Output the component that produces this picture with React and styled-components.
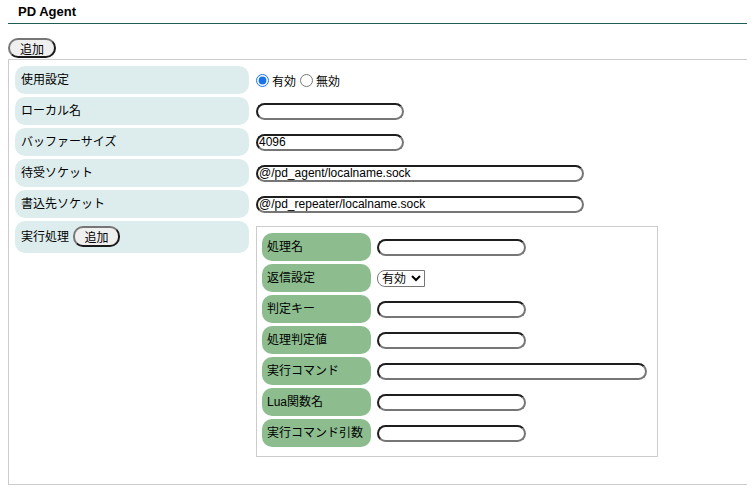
import React from "react";
import styled, { createGlobalStyle } from "styled-components";

const GlobalStyle = createGlobalStyle`
  html, body { overflow-x: hidden; }
  body {
    margin: 0 8px;
    background: #fff;
    color: #000;
    font-family: "Liberation Sans", "Noto Sans CJK JP", sans-serif;
  }
`;

const cjk = `"Liberation Sans", "Noto Sans CJK JP", sans-serif`;

const Header = styled.div`
  width: calc(100% + 30px);
  height: 23px;
  line-height: 23px;
  padding-left: 10px;
  font-size: 13px;
  font-weight: bold;
  border-bottom: 1px solid #1d5e57;
`;

const PillButton = styled.button`
  display: ${(p) => (p.$inline ? "inline-block" : "block")};
  width: ${(p) => p.$w}px;
  height: ${(p) => p.$h}px;
  margin: ${(p) => (p.$inline ? "0 0 0 4px" : "14px 0 1px 0")};
  padding: 0;
  background: #efefef;
  border-style: solid;
  border-width: 2px;
  border-color: #767676 #1a1a1a #1a1a1a #767676;
  border-radius: 10px;
  font-family: ${cjk};
  font-size: 12px;
  color: #000;
  vertical-align: middle;
`;

const Panel = styled.div`
  width: calc(100% + 30px);
  height: 426px;
  box-sizing: border-box;
  border: 1px solid #cccccc;
  padding: 6px;
`;

const Grid = styled.div`
  display: grid;
  grid-template-columns: ${(p) => p.$label}px auto;
  column-gap: ${(p) => p.$gap}px;
  row-gap: 3px;
  align-items: center;
`;

const Label = styled.div`
  background: ${(p) => (p.$inner ? "#8dbd8f" : "#ddeded")};
  border-radius: 10px;
  padding: ${(p) => (p.$tall ? "5px 6px 6px" : p.$inner ? "5px 5px" : "5px 6px")};
  line-height: 18px;
  font-family: ${cjk};
  font-size: 12px;
  display: flex;
  align-items: center;
  align-self: ${(p) => (p.$tall ? "start" : "stretch")};
`;

const Value = styled.div`
  display: flex;
  align-items: center;
  font-family: ${cjk};
  font-size: 12px;
  align-self: ${(p) => (p.$top ? "start" : "center")};
  margin-top: ${(p) => (p.$top ? 5 : 0)}px;
`;

const Radio = styled.input`
  width: 13px;
  height: 13px;
  margin: 0 3px 0 0;
  accent-color: #1a73e8;
`;

const RadioText = styled.span`
  margin-right: 4px;
`;

const TextInput = styled.input`
  width: ${(p) => p.$w}px;
  height: 17px;
  box-sizing: border-box;
  padding: 0 1px;
  margin: 0;
  border-style: solid;
  border-width: 2px;
  border-color: #1e1e1e #767676 #767676 #1e1e1e;
  border-radius: 10px;
  font-family: "Liberation Sans", sans-serif;
  font-size: 12px;
  color: #000;
  background: #fff;
  outline: none;
`;

const Select = styled.select`
  width: 48px;
  height: 17px;
  box-sizing: border-box;
  padding: 0;
  margin: 0;
  border: 1px solid #767676;
  border-radius: 8px 0 0 8px;
  font-family: ${cjk};
  font-size: 12px;
  background: #fff;
  color: #000;
`;

const InnerBox = styled.div`
  width: 402px;
  height: 231px;
  box-sizing: border-box;
  border: 1px solid #cccccc;
  padding: 6px 5px;
`;

const innerRows = [
  { label: "処理名", w: 149 },
  { label: "返信設定", select: true },
  { label: "判定キー", w: 149 },
  { label: "処理判定値", w: 149 },
  { label: "実行コマンド", w: 270 },
  { label: "Lua関数名", w: 149 },
  { label: "実行コマンド引数", w: 149 },
];

export default function App() {
  return (
    <>
      <GlobalStyle />
      <Header>PD Agent</Header>
      <PillButton $w={48} $h={20}>追加</PillButton>
      <Panel>
        <Grid $label={234} $gap={7}>
          <Label>使用設定</Label>
          <Value>
            <Radio type="radio" name="use" defaultChecked />
            <RadioText>有効</RadioText>
            <Radio type="radio" name="use" />
            <RadioText>無効</RadioText>
          </Value>

          <Label>ローカル名</Label>
          <Value>
            <TextInput $w={148} defaultValue="" />
          </Value>

          <Label>バッファーサイズ</Label>
          <Value>
            <TextInput $w={148} defaultValue="4096" />
          </Value>

          <Label>待受ソケット</Label>
          <Value>
            <TextInput $w={328} defaultValue="@/pd_agent/localname.sock" />
          </Value>

          <Label>書込先ソケット</Label>
          <Value>
            <TextInput $w={328} defaultValue="@/pd_repeater/localname.sock" />
          </Value>

          <Label $tall>
            実行処理
            <PillButton $inline $w={47} $h={21}>追加</PillButton>
          </Label>
          <Value $top>
            <InnerBox>
              <Grid $label={109} $gap={6}>
                {innerRows.map((r) => (
                  <React.Fragment key={r.label}>
                    <Label $inner>{r.label}</Label>
                    <Value>
                      {r.select ? (
                        <Select defaultValue="有効">
                          <option>有効</option>
                          <option>無効</option>
                        </Select>
                      ) : (
                        <TextInput $w={r.w} defaultValue="" />
                      )}
                    </Value>
                  </React.Fragment>
                ))}
              </Grid>
            </InnerBox>
          </Value>
        </Grid>
      </Panel>
    </>
  );
}
